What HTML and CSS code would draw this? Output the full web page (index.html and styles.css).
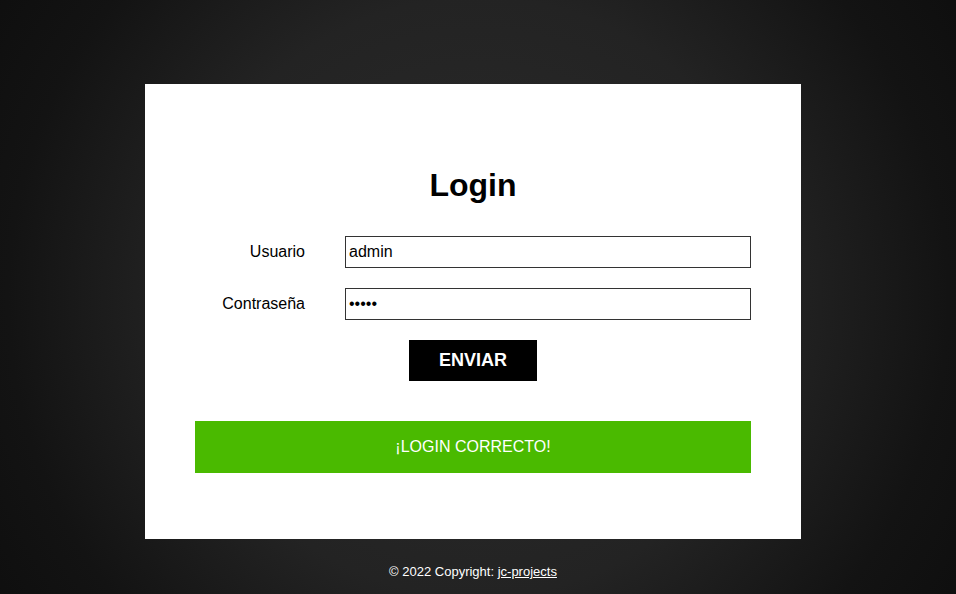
FILE: index.html
```html
<!DOCTYPE html>
<html lang="es">
<head>
<meta charset="utf-8">
<title>Login</title>
<link rel="stylesheet" href="styles.css">
</head>
<body>
<main class="page">
  <section class="card">
    <h1 class="title">Login</h1>
    <form class="form">
      <div class="row">
        <label class="label" for="user">Usuario</label>
        <input class="input" id="user" type="text" value="admin">
      </div>
      <div class="row">
        <label class="label" for="pass">Contraseña</label>
        <input class="input" id="pass" type="password" value="admin">
      </div>
      <div class="actions">
        <button class="btn" type="button">ENVIAR</button>
      </div>
    </form>
    <div class="banner">¡LOGIN CORRECTO!</div>
  </section>
  <footer class="footer">© 2022 Copyright: <a class="link" href="#">jc-projects</a></footer>
</main>
</body>
</html>
```

FILE: styles.css
```css
html, body {
  margin: 0;
  padding: 0;
  height: 100%;
}
body {
  background: radial-gradient(circle at 50% 50%, #2c2c2c 0px, #232323 300px, #131313 470px, #0d0d0d 600px);
  font-family: "Liberation Sans", Arial, sans-serif;
  color: #000;
}
.page {
  display: flex;
  flex-direction: column;
  padding-top: 84px;
}
.card {
  background: #fff;
  width: 656px;
  box-sizing: border-box;
  margin-left: 145px;
  padding: 83px 50px 66px;
}
.title {
  margin: 0 0 32px;
  font-size: 32px;
  line-height: 37px;
  font-weight: bold;
  text-align: center;
}
.form {
  display: flex;
  flex-direction: column;
  gap: 20px;
}
.row {
  display: grid;
  grid-template-columns: 150px 1fr;
  align-items: center;
  height: 32px;
}
.label {
  font-size: 16px;
  text-align: right;
  padding-right: 40px;
}
.input {
  box-sizing: border-box;
  height: 32px;
  width: 100%;
  border: 1px solid #333;
  padding: 0 3px;
  font-family: "Liberation Sans", Arial, sans-serif;
  font-size: 16px;
  color: #000;
  background: #fff;
  outline: none;
}
.actions {
  display: flex;
  justify-content: center;
}
.btn {
  width: 128px;
  height: 41px;
  background: #000;
  color: #fff;
  border: none;
  font-family: "Liberation Sans", Arial, sans-serif;
  font-weight: bold;
  font-size: 18px;
  padding: 0;
}
.banner {
  margin-top: 40px;
  height: 52px;
  background: #4aba00;
  color: #fff;
  font-size: 16px;
  display: flex;
  align-items: center;
  justify-content: center;
}
.footer {
  margin-top: 25px;
  margin-left: 145px;
  width: 656px;
  text-align: center;
  color: #fff;
  font-size: 13px;
  line-height: 16px;
}
.link {
  color: #fff;
}
```
